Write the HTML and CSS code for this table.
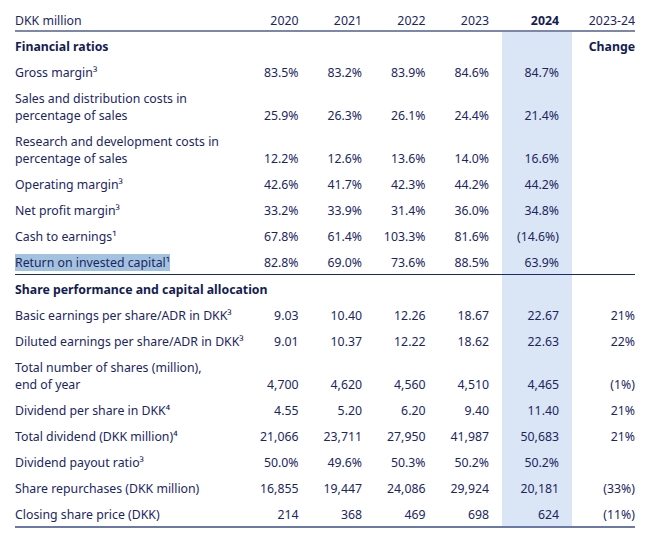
FILE: index.html
```html
<!DOCTYPE html>
<html lang="en">
<head>
<meta charset="utf-8">
<title>Financial ratios</title>
<link rel="stylesheet" href="styles.css">
</head>
<body>
<div class="page">
<table class="fin">
  <colgroup>
    <col class="c-label"><col class="c-yr"><col class="c-yr"><col class="c-yr"><col class="c-yr"><col class="c-cur"><col class="c-chg">
  </colgroup>
  <thead>
    <tr>
      <th class="lbl">DKK million</th>
      <th>2020</th><th>2021</th><th>2022</th><th>2023</th><th class="cur bold">2024</th><th class="chg">2023-24</th>
    </tr>
  </thead>
  <tbody>
    <tr class="sec">
      <td class="lbl">Financial ratios</td>
      <td></td><td></td><td></td><td></td><td class="cur"></td><td class="chg">Change</td>
    </tr>
    <tr><td class="lbl">Gross margin³</td><td>83.5%</td><td>83.2%</td><td>83.9%</td><td>84.6%</td><td class="cur">84.7%</td><td class="chg"></td></tr>
    <tr><td class="lbl">Sales and distribution costs in<br>percentage of sales</td><td>25.9%</td><td>26.3%</td><td>26.1%</td><td>24.4%</td><td class="cur">21.4%</td><td class="chg"></td></tr>
    <tr><td class="lbl">Research and development costs in<br>percentage of sales</td><td>12.2%</td><td>12.6%</td><td>13.6%</td><td>14.0%</td><td class="cur">16.6%</td><td class="chg"></td></tr>
    <tr><td class="lbl">Operating margin³</td><td>42.6%</td><td>41.7%</td><td>42.3%</td><td>44.2%</td><td class="cur">44.2%</td><td class="chg"></td></tr>
    <tr><td class="lbl">Net profit margin³</td><td>33.2%</td><td>33.9%</td><td>31.4%</td><td>36.0%</td><td class="cur">34.8%</td><td class="chg"></td></tr>
    <tr><td class="lbl">Cash to earnings¹</td><td>67.8%</td><td>61.4%</td><td>103.3%</td><td>81.6%</td><td class="cur">(14.6%)</td><td class="chg"></td></tr>
    <tr class="end"><td class="lbl"><span class="sel">Return on invested capital¹</span></td><td>82.8%</td><td>69.0%</td><td>73.6%</td><td>88.5%</td><td class="cur">63.9%</td><td class="chg"></td></tr>
    <tr class="sec">
      <td class="lbl wide" colspan="5">Share performance and capital allocation</td><td class="cur"></td><td class="chg"></td>
    </tr>
    <tr><td class="lbl">Basic earnings per share/ADR in DKK³</td><td>9.03</td><td>10.40</td><td>12.26</td><td>18.67</td><td class="cur">22.67</td><td class="chg">21%</td></tr>
    <tr><td class="lbl">Diluted earnings per share/ADR in DKK³</td><td>9.01</td><td>10.37</td><td>12.22</td><td>18.62</td><td class="cur">22.63</td><td class="chg">22%</td></tr>
    <tr><td class="lbl">Total number of shares (million),<br>end of year</td><td>4,700</td><td>4,620</td><td>4,560</td><td>4,510</td><td class="cur">4,465</td><td class="chg">(1%)</td></tr>
    <tr><td class="lbl">Dividend per share in DKK⁴</td><td>4.55</td><td>5.20</td><td>6.20</td><td>9.40</td><td class="cur">11.40</td><td class="chg">21%</td></tr>
    <tr><td class="lbl">Total dividend (DKK million)⁴</td><td>21,066</td><td>23,711</td><td>27,950</td><td>41,987</td><td class="cur">50,683</td><td class="chg">21%</td></tr>
    <tr><td class="lbl">Dividend payout ratio³</td><td>50.0%</td><td>49.6%</td><td>50.3%</td><td>50.2%</td><td class="cur">50.2%</td><td class="chg"></td></tr>
    <tr><td class="lbl">Share repurchases (DKK million)</td><td>16,855</td><td>19,447</td><td>24,086</td><td>29,924</td><td class="cur">20,181</td><td class="chg">(33%)</td></tr>
    <tr class="last"><td class="lbl">Closing share price (DKK)</td><td>214</td><td>368</td><td>469</td><td>698</td><td class="cur">624</td><td class="chg">(11%)</td></tr>
  </tbody>
</table>
</div>
</body>
</html>
```

FILE: styles.css
```css
html, body {
  margin: 0;
  padding: 0;
  background: #ffffff;
}

.page {
  padding: 0 0 0 15px;
  font-family: "Noto Sans", "Open Sans", sans-serif;
  font-size: 12.3px;
  line-height: 17px;
  color: #1b265f;
}

.fin {
  border-collapse: collapse;
  table-layout: fixed;
  width: 620px;
}

.c-label { width: 233px; }
.c-yr { width: 63.5px; }
.c-cur { width: 70px; }
.c-chg { width: 63px; }

.fin th,
.fin td {
  padding: 6px 13px 3px 0;
  text-align: right;
  white-space: nowrap;
  vertical-align: bottom;
  font-weight: normal;
}

.fin thead th {
  padding-top: 12px;
  padding-bottom: 1px;
  border-bottom: 2px solid #7d87ab;
}

.fin .lbl {
  text-align: left;
  padding-right: 0;
}

.fin .chg {
  padding-right: 0;
}

.fin .bold,
.sec td {
  font-weight: 700;
  color: #141c52;
}

.fin .wide {
  overflow: visible;
}

.fin tbody .cur {
  background: #dae5f5;
}

.end td {
  border-bottom: 1.5px solid #1b2a6e;
}

.last td {
  border-bottom: 2px solid #6b79a8;
}

.sel {
  background: #a3c2df;
}
```
